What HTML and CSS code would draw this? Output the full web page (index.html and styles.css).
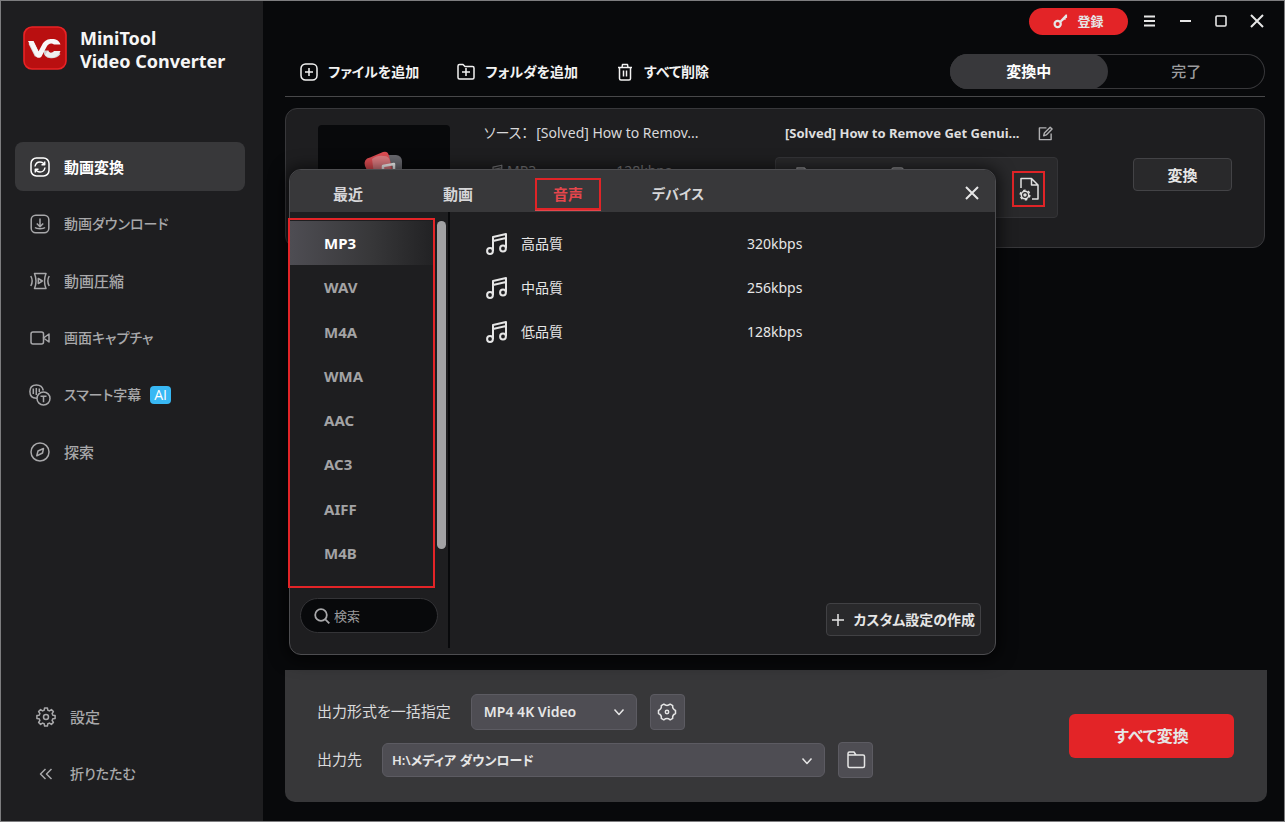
FILE: index.html
```html
<!DOCTYPE html>
<html lang="ja">
<head>
<meta charset="utf-8">
<meta name="viewport" content="width=device-width, initial-scale=1">
<title>MiniTool Video Converter</title>
<link rel="stylesheet" href="styles.css">
</head>
<body>
<div class="window">
  <aside class="sidebar">
    <div class="brand">
      <svg class="brand-logo" viewBox="0 0 44 44" aria-hidden="true">
        <rect x="1" y="1" width="42" height="42" rx="8" fill="#b90f10" stroke="#ea2325" stroke-width="1.6"/>
        <path d="M8 16.5 14.5 29.5" stroke="#d5d5d5" stroke-width="5.6" fill="none"/>
        <path d="M35.5 26.5C32 31 23 31.500 23 24.500" stroke="#d0d0d0" stroke-width="5" fill="none"/>
        <path d="M5 15h5.500l5 10.500L19 19c2.500-5 6-6 10-6 4.500 0 7 1.500 8.500 5.500h-6.500c-3-2-6-.5-7.500 2.500L18.500 30.500c-1 1.800-4.500 1.800-5.500 0z" fill="#f8f8f8"/>
        <path d="M31 25h6.500c-1.500 4-4 6.500-9 6.500-3 0-5-1-6.500-2.500l3-4.500c1 2.500 4 3 6 .5z" fill="#efefef"/>
      </svg>
      <div class="brand-name">MiniTool<br>Video Converter</div>
    </div>
    <nav class="nav">
      <button class="nav-item active">
        <svg class="icon20" viewBox="0 0 20 20"><rect x="1" y="1" width="18" height="18" rx="5.500"/><path d="M5 9.500c.5-3 2.500-4.500 5-4.500 2 0 3.500 1 4.300 2.500M14.700 4.500v3.200h-3.200M15 10.500c-.5 3-2.500 4.500-5 4.500-2 0-3.500-1-4.300-2.500M5.300 15.500v-3.200h3.200"/></svg>
        <span>動画変換</span>
      </button>
      <button class="nav-item">
        <svg class="icon20" viewBox="0 0 20 20"><rect x="1.200" y="1.200" width="17.600" height="17.600" rx="4.500"/><path d="M10 4.500v8M6.800 9.500 10 12.700l3.200-3.200M5 13.500c1.500 1.500 8.500 1.500 10 0"/></svg>
        <span class="kana">動画ダウンロード</span>
      </button>
      <button class="nav-item">
        <svg class="icon20" viewBox="0 0 20 20"><path d="M4.500 2.500h11.500c-2 5-2 10 0 15H4.500c2-5 2-10 0-15zM8.300 7.500v5l4-2.500zM.8 5c1.800 3.300 1.800 6.700 0 10M19.200 5c-1.800 3.300-1.800 6.700 0 10"/></svg>
        <span>動画圧縮</span>
      </button>
      <button class="nav-item">
        <svg class="icon20" viewBox="0 0 20 20"><rect x="1" y="4" width="12.500" height="12" rx="2"/><path d="m13.500 10 5.500-4v8z"/></svg>
        <span class="kana">画面キャプチャ</span>
      </button>
      <button class="nav-item">
        <svg class="icon20 subtitle-icon" viewBox="1 1 20 20"><path d="M8 14.200C3 14.500.9 12 .9 7.500.9 3 3.500 1 7.500 1c4 0 6 1.500 6.800 5.500M4.300 4.500v5.500M7.300 4v7M10.300 4.500V8"/><circle cx="14.500" cy="14.500" r="6.500"/><path d="M11.500 12.300h6M14.500 12.300v6"/></svg>
        <span class="kana">スマート字幕</span><span class="ai-badge">AI</span>
      </button>
      <button class="nav-item">
        <svg class="icon20" viewBox="0 0 20 20"><circle cx="10" cy="10" r="9"/><path d="m13.500 6.500-1 4.500-5.700 2.800L8 9z"/></svg>
        <span>探索</span>
      </button>
    </nav>
    <div class="nav nav-bottom">
      <button class="nav-item">
        <svg class="icon20" viewBox="0 0 20 20"><path d="M8.600.9h2.800l.4 2.300 1.700.7 1.900-1.300 2 2-1.300 1.900.7 1.700 2.300.4v2.800l-2.300.4-.7 1.700 1.300 1.900-2 2-1.900-1.300-1.700.7-.4 2.300H8.600l-.4-2.300-1.700-.7-1.900 1.300-2-2 1.300-1.900-.7-1.700-2.300-.4V8.600l2.300-.4.7-1.700-1.300-1.900 2-2 1.900 1.300 1.700-.7z"/><circle cx="10" cy="10" r="2.500"/></svg>
        <span>設定</span>
      </button>
      <button class="nav-item">
        <svg class="icon20" viewBox="0 0 20 20"><path d="M9.500 5 4.500 10l5 5M15.500 5l-5 5 5 5"/></svg>
        <span class="kana">折りたたむ</span>
      </button>
    </div>
  </aside>

  <main class="main">
    <header class="titlebar">
      <button class="register">
        <svg class="key-icon" viewBox="0 0 16 16"><circle cx="5" cy="10.700" r="3.300" fill="none" stroke="currentColor" stroke-width="2.400"/><path d="m6.500 8 7-7.500H15V4l-1.500.5V6H12l-4 3.500z" fill="currentColor"/></svg>
        <span>登録</span>
      </button>
      <button class="win-btn" aria-label="メニュー"><svg viewBox="0 0 16 16"><path d="M3 3.500h11M3 8h11M3 12.500h11"/></svg></button>
      <button class="win-btn" aria-label="最小化"><svg viewBox="0 0 16 16"><path d="M3 8h11"/></svg></button>
      <button class="win-btn" aria-label="最大化"><svg viewBox="0 0 16 16"><rect x="3" y="3" width="10" height="10" rx="1" stroke-width="1.600"/></svg></button>
      <button class="win-btn" aria-label="閉じる"><svg viewBox="0 0 16 16"><path d="m2 2 12 12M14 2 2 14"/></svg></button>
    </header>

    <div class="toolbar">
      <button class="tool">
        <svg viewBox="0 0 18 18"><rect x="1" y="1" width="16" height="16" rx="4.500"/><path d="M9 5v8M5 9h8"/></svg><span>ファイルを追加</span>
      </button>
      <button class="tool">
        <svg viewBox="0 0 18 18"><path d="M1 14.500V3Q1 1.500 2.500 1.500H6L8 3.500h7.500Q17 3.500 17 5v9.500Q17 16 15.500 16h-13Q1 16 1 14.500zM9 5v8M5 9h8"/></svg><span>フォルダを追加</span>
      </button>
      <button class="tool">
        <svg viewBox="0 0 18 18"><path d="M2 4.500h14M3.500 4.500v11q0 1.500 1.500 1.500h8q1.500 0 1.500-1.500v-11M6 4.500 6.500 1.500h5l.5 3M7.500 7.500v6M10.500 7.500v6"/></svg><span>すべて削除</span>
      </button>
      <div class="segments">
        <button class="segment selected">変換中</button>
        <button class="segment">完了</button>
      </div>
    </div>

    <section class="task">
      <div class="thumb">
        <svg viewBox="0 0 48 48"><rect x="20" y="5" width="22" height="30" rx="6" fill="#68686e"/><path d="M5 16Q3 9 10 7.500L23 2q5-1.500 6 4l5 20-20 9z" fill="#dd4c52"/><path d="M12 9q5-4 12-3 5 0 6 5l2 21H15z" fill="#db7b80"/><path d="M23 26V16l11-2v10" fill="none" stroke="#f4f4f4" stroke-width="2.500"/></svg>
      </div>
      <div class="source">
        <div class="line"><span>ソース：</span><span>[Solved] How to Remov...</span></div>
        <div class="meta">
          <svg class="note-small" viewBox="0 0 24 24"><path d="M8 20V5l14-3v15M8 9l14-3"/><circle cx="5" cy="20" r="3"/><circle cx="19" cy="17" r="3"/></svg>
          <span>MP3</span><span class="rate">128kbps</span>
        </div>
      </div>
      <div class="output">
        <div class="line output-title"><strong>[Solved] How to Remove Get Genui...</strong>
          <button class="plain-btn" aria-label="名前を編集"><svg viewBox="0 0 16 16"><path d="M9 2H1.500v12.500h12.500V8M6 10.500l.8-3L13 1.300l2 2-6.200 6.200z"/></svg></button>
        </div>
        <div class="output-box">
          <svg class="box-icon" viewBox="0 0 14 16"><path d="M1 15V1h8l4 4v10zM9 1v4h4"/></svg>
          <svg class="box-icon" viewBox="0 0 14 16"><rect x="1" y="1" width="12" height="12" rx="2"/></svg>
          <button class="format-btn" aria-label="形式の設定">
            <svg viewBox="0 0 24 26"><path d="M4 12V2.500h10.500L21 9v14h-6M14.500 2.500V9H21"/><circle cx="8" cy="19" r="3.700"/><circle cx="8" cy="19" r="4.800" stroke-dasharray="2.500 2.530"/><circle cx="8" cy="19" r="1" fill="currentColor"/></svg>
          </button>
        </div>
      </div>
      <button class="convert">変換</button>
    </section>

    <section class="dialog" role="dialog" aria-label="出力形式">
      <header class="dialog-head">
        <div class="dialog-tabs">
          <button class="dialog-tab"><span>最近</span></button>
          <button class="dialog-tab"><span>動画</span></button>
          <button class="dialog-tab current"><span>音声</span></button>
          <button class="dialog-tab kana"><span>デバイス</span></button>
        </div>
        <button class="win-btn" aria-label="閉じる"><svg viewBox="0 0 16 16"><path d="m2 2 12 12M14 2 2 14"/></svg></button>
      </header>
      <div class="dialog-body">
        <div class="formats">
          <div class="format-area">
            <div class="format-list">
              <button class="format chosen">MP3</button>
              <button class="format">WAV</button>
              <button class="format">M4A</button>
              <button class="format">WMA</button>
              <button class="format">AAC</button>
              <button class="format">AC3</button>
              <button class="format">AIFF</button>
              <button class="format">M4B</button>
            </div>
            <div class="scrollbar"></div>
          </div>
          <label class="search">
            <svg viewBox="0 0 16 16"><circle cx="7" cy="7" r="5.800"/><path d="m11.300 11.300 4 4"/></svg>
            <input type="text" placeholder="検索" aria-label="検索">
          </label>
        </div>
        <div class="presets">
          <button class="preset"><svg viewBox="0 0 24 24"><path d="M8 19V5l13-3v14M8 9l13-3"/><circle cx="5" cy="19" r="2.900"/><circle cx="18" cy="16.500" r="2.900"/></svg><span class="quality">高品質</span><span>320kbps</span></button>
          <button class="preset"><svg viewBox="0 0 24 24"><path d="M8 19V5l13-3v14M8 9l13-3"/><circle cx="5" cy="19" r="2.900"/><circle cx="18" cy="16.500" r="2.900"/></svg><span class="quality">中品質</span><span>256kbps</span></button>
          <button class="preset"><svg viewBox="0 0 24 24"><path d="M8 19V5l13-3v14M8 9l13-3"/><circle cx="5" cy="19" r="2.900"/><circle cx="18" cy="16.500" r="2.900"/></svg><span class="quality">低品質</span><span>128kbps</span></button>
          <button class="custom"><svg viewBox="0 0 14 14"><path d="M7 1v12M1 7h12"/></svg><span>カスタム設定の作成</span></button>
        </div>
      </div>
    </section>

    <footer class="footer">
      <div class="settings">
        <div class="setting">
          <label for="format">出力形式を一括指定</label>
          <div class="select-wrap select-format">
            <select id="format"><option>MP4 4K Video</option></select>
            <svg viewBox="0 0 12 12"><path d="m1.500 3.500 4.500 5 4.500-5"/></svg>
          </div>
          <button class="square-btn" aria-label="形式の詳細"><svg viewBox="0 0 20 20"><path d="M6.800 2.200Q8.400 3.500 10 3.500t3.200-1.300l2.500 1.500q-.6 3.300 2.800 4.800v3q-3.400 1.500-2.800 4.800l-2.500 1.500Q11.600 16.500 10 16.500t-3.200 1.300l-2.500-1.500q.6-3.300-2.800-4.800v-3q3.400-1.500 2.800-4.800z"/><circle cx="10" cy="10" r="1.700"/></svg></button>
        </div>
        <div class="setting">
          <label for="folder">出力先</label>
          <div class="select-wrap select-folder">
            <select id="folder"><option>H:\メディア ダウンロード</option></select>
            <svg viewBox="0 0 12 12"><path d="m1.500 3.500 4.500 5 4.500-5"/></svg>
          </div>
          <button class="square-btn" aria-label="フォルダを開く"><svg viewBox="0 0 20 20"><path d="M2 16V3.500Q2 2 3.500 2H8l2 3h7q1.500 0 1.500 1.500V16q0 1.500-1.500 1.500H3.500Q2 17.500 2 16zM2 5h8"/></svg></button>
        </div>
      </div>
      <button class="convert-all">すべて変換</button>
    </footer>
  </main>
</div>
</body>
</html>
```

FILE: styles.css
```css
* { box-sizing: border-box; }

body {
  margin: 0;
  background: #08090b;
  color: #e6e6e6;
  font: 15px/20px "Open Sans", "Noto Sans CJK JP", sans-serif;
  font-feature-settings: "palt";
}

button, input, select {
  font: inherit;
  font-feature-settings: inherit;
  color: inherit;
}

button {
  padding: 0;
  border: 0;
  background: none;
  cursor: pointer;
  white-space: nowrap;
}

svg {
  display: block;
  flex: none;
  fill: none;
  stroke: currentColor;
  stroke-width: 1.5;
  stroke-linejoin: round;
}

.kana { font-size: 14px; }

.window {
  display: flex;
  min-height: 100vh;
  border: 1px solid #7d7d7f;
}

/* Sidebar */
.sidebar {
  display: flex;
  flex-direction: column;
  flex: none;
  width: 262px;
  padding: 25px 18px 23px 14px;
  background: #1e1e20;
}

.brand {
  display: flex;
  align-items: flex-start;
  gap: 13px;
  padding-left: 8px;
}

.brand-logo { width: 44px; height: 44px; stroke: none; }

.brand-name {
  padding-top: 1px;
  color: #f6f6f6;
  font-family: "Noto Sans", sans-serif;
  font-size: 18px;
  font-weight: 700;
  line-height: 23px;
  white-space: nowrap;
}

.nav {
  display: flex;
  flex-direction: column;
  gap: 8px;
  margin-top: 69px;
}

.nav-item {
  display: flex;
  align-items: center;
  gap: 14px;
  height: 49px;
  padding-left: 15px;
  border-radius: 8px;
  color: #a8a8aa;
  font-weight: 500;
}

.nav-item.active {
  background: #38383a;
  color: #fff;
  font-weight: 700;
}

.icon20 { width: 20px; height: 20px; }
.subtitle-icon { overflow: visible; }

.ai-badge {
  margin-left: -5px;
  padding: 0 4px;
  border-radius: 4px;
  background: #38b8f4;
  color: #fff;
  font-size: 14px;
  line-height: 18px;
}

.nav-bottom { margin-top: auto; }
.nav-bottom .nav-item { padding-left: 21px; }

/* Main area */
.main {
  position: relative;
  display: flex;
  flex: 1;
  flex-direction: column;
  min-width: 0;
  background: #08090b;
}

.titlebar {
  display: flex;
  align-items: center;
  justify-content: flex-end;
  height: 40px;
  padding-right: 9px;
}

.register {
  display: flex;
  align-items: center;
  justify-content: center;
  gap: 9px;
  width: 99px;
  height: 27px;
  margin-right: 3px;
  border-radius: 14px;
  background: #e32427;
  font-size: 13px;
  font-weight: 700;
}

.key-icon { width: 15px; height: 15px; stroke: none; }

.win-btn {
  display: flex;
  align-items: center;
  justify-content: center;
  width: 36px;
  height: 36px;
}

.win-btn svg { width: 16px; height: 16px; stroke-width: 2; }

.toolbar {
  display: flex;
  align-items: center;
  gap: 38px;
  margin: 0 19px 11px 22px;
  padding: 13px 0 7px 15px;
  border-bottom: 1px solid #48484a;
}

.tool {
  display: flex;
  align-items: center;
  gap: 10px;
  color: #f2f2f2;
  font-size: 14px;
  font-weight: 700;
}

.tool svg { width: 18px; height: 18px; }

.segments {
  display: flex;
  width: 315px;
  margin-left: auto;
  border-radius: 18px;
  box-shadow: inset 0 0 0 1px #38383b;
}

.segment {
  flex: 1;
  height: 35px;
  padding-bottom: 2px;
  border-radius: 18px;
  color: #9c9c9e;
  font-weight: 500;
}

.segment.selected {
  background: #38383b;
  color: #fff;
  font-weight: 700;
}

.task {
  display: flex;
  margin: 0 19px 0 22px;
  padding: 14px 32px 16px;
  border: 1px solid #38383b;
  border-radius: 12px;
  background: #1e1e20;
  font-size: 14px;
}

.thumb {
  display: flex;
  justify-content: center;
  width: 132px;
  height: 106px;
  margin-top: 2px;
  padding-top: 25px;
  border-radius: 4px;
  background: #08090b;
}

.thumb svg { width: 48px; height: 48px; stroke: none; }

.source {
  width: 301px;
  margin-left: 34px;
  font-family: "Noto Sans", "Noto Sans CJK JP", sans-serif;
}

.line {
  display: flex;
  align-items: center;
  gap: 8px;
  height: 20px;
  color: #d8d8da;
  line-height: 20px;
  white-space: nowrap;
}

.meta {
  display: flex;
  align-items: center;
  gap: 4px;
  padding: 18px 0 0 4px;
  color: #77777a;
}

.note-small { width: 15px; height: 15px; stroke-width: 2; }
.rate { margin-left: 76px; }

.output { font-family: "Noto Sans", "Noto Sans CJK JP", sans-serif; }

.output-title { gap: 18px; color: #dededf; }
.output-title strong { font-size: 13px; font-weight: 700; }
.plain-btn svg { width: 15px; height: 15px; color: #b0b0b2; }

.output-box {
  display: flex;
  align-items: flex-start;
  gap: 82px;
  width: 283px;
  height: 61px;
  margin: 14px 0 0 -10px;
  padding: 9px 12px 0 20px;
  border: 1px solid #343437;
  border-radius: 4px;
  background: #29292b;
  color: #9a9a9d;
}

.box-icon { width: 13px; height: 15px; }

.format-btn {
  display: grid;
  place-items: center;
  width: 33px;
  height: 36px;
  margin: 4px 0 0 auto;
  border: 2px solid #e02427;
  color: #e0e0e0;
}

.format-btn svg { width: 24px; height: 26px; }

.convert {
  width: 99px;
  height: 33px;
  margin: 35px 0 0 auto;
  border: 1px solid #434346;
  border-radius: 4px;
  background: #29292b;
  font-size: 15px;
  font-weight: 700;
}

/* Format dialog */
.dialog {
  position: absolute;
  top: 168px;
  right: 288px;
  left: 26px;
  border: 1px solid #4d4d50;
  border-radius: 12px;
  background: #1e1e20;
  box-shadow: 0 2px 16px 4px rgba(0, 0, 0, 0.6);
}

.dialog-head {
  display: flex;
  align-items: center;
  justify-content: space-between;
  height: 42px;
  padding: 0 5px 0 3px;
  border-radius: 11px 11px 0 0;
  background: #38383a;
}

.dialog-head .win-btn { margin-top: 4px; }

.dialog-tabs { display: flex; }

.dialog-tab {
  display: grid;
  place-items: center;
  width: 110px;
  padding-top: 6px;
  color: #d6d6d8;
  font-weight: 700;
}

.dialog-tab span { padding: 6px 0; }

.current span {
  width: 66px;
  padding: 4px 0;
  border: 2px solid #e02427;
  color: #e5464c;
  box-shadow: 0 1px #e5464c;
}

.dialog-body { display: flex; }

.formats {
  width: 160px;
  margin-bottom: 6px;
  border-right: 2px solid #08090b;
}

.format-area {
  display: flex;
  gap: 2px;
  padding-top: 6px;
}

.format-list {
  display: flex;
  flex-direction: column;
  width: 147px;
  height: 370px;
  margin-left: -2px;
  padding: 1px 0 11px;
  border: 2px solid #e32427;
}

.format {
  flex: 1;
  padding-left: 34px;
  color: #a3a3a5;
  font-family: "Noto Sans", sans-serif;
  font-weight: 700;
  text-align: left;
}

.format.chosen {
  background: linear-gradient(90deg, #4e4d53, #38383a 55%, #222224);
  color: #fff;
}

.scrollbar {
  width: 9px;
  height: 328px;
  margin-top: 3px;
  border-radius: 5px;
  background: #a2a2a4;
}

.search {
  display: flex;
  align-items: center;
  gap: 4px;
  width: 138px;
  height: 35px;
  margin: 10px 0 15px 10px;
  padding: 0 13px;
  border: 1px solid #343437;
  border-radius: 18px;
  background: #08090b;
  color: #a8a8aa;
}

.search svg { width: 16px; height: 16px; stroke-width: 1.800; }

.search input {
  width: 100%;
  min-width: 0;
  padding: 0;
  border: 0;
  outline: 0;
  background: none;
  font-size: 13px;
}

.search input::placeholder { color: #9a9a9c; opacity: 1; }

.presets {
  display: flex;
  flex: 1;
  flex-direction: column;
  padding: 10px 14px 18px 35px;
  font-family: "Noto Sans", "Noto Sans CJK JP", sans-serif;
}

.preset {
  display: flex;
  align-items: center;
  gap: 12px;
  height: 44px;
  font-size: 14px;
}

.preset svg { width: 24px; height: 24px; stroke-width: 2; }
.quality { width: 214px; text-align: left; }

.custom {
  display: flex;
  align-items: center;
  align-self: flex-end;
  gap: 8px;
  height: 33px;
  margin-top: auto;
  padding: 0 5px 0 4px;
  border: 1px solid #414144;
  border-radius: 4px;
  background: #29292b;
  font-size: 14px;
  font-weight: 700;
}

.custom svg { width: 14px; height: 14px; }

/* Output settings */
.footer {
  display: flex;
  align-items: center;
  justify-content: space-between;
  margin: auto 17px 19px 22px;
  padding: 24px 33px 24px 32px;
  border-radius: 0 0 10px 10px;
  background: #373739;
}

.settings {
  display: flex;
  flex-direction: column;
  gap: 12px;
}

.setting {
  display: flex;
  align-items: center;
}

.setting label {
  margin-right: 20px;
  padding-bottom: 2px;
  color: #dadadc;
}

.select-wrap {
  position: relative;
  margin-right: 13px;
}

.select-format { width: 166px; }
.select-folder { width: 443px; }

.select-wrap select {
  display: block;
  width: 100%;
  height: 36px;
  padding: 0 30px 0 12px;
  border: 1px solid #5c5b62;
  border-radius: 6px;
  appearance: none;
  background: #4e4d53;
  font-family: "Noto Sans", "Noto Sans CJK JP", sans-serif;
  font-size: 14px;
  font-weight: 600;
}

.select-folder select {
  height: 34px;
  padding-left: 9px;
  font-size: 13px;
}

.select-wrap svg {
  position: absolute;
  top: 12px;
  right: 12px;
  width: 12px;
  height: 12px;
  pointer-events: none;
}

.square-btn {
  display: grid;
  place-items: center;
  width: 35px;
  height: 36px;
  border: 1px solid #5c5b62;
  border-radius: 4px;
  background: #4e4d53;
}

.square-btn svg { width: 20px; height: 20px; }

.convert-all {
  width: 165px;
  height: 44px;
  border-radius: 6px;
  background: #e32427;
  font-size: 16px;
  font-weight: 700;
}
```
